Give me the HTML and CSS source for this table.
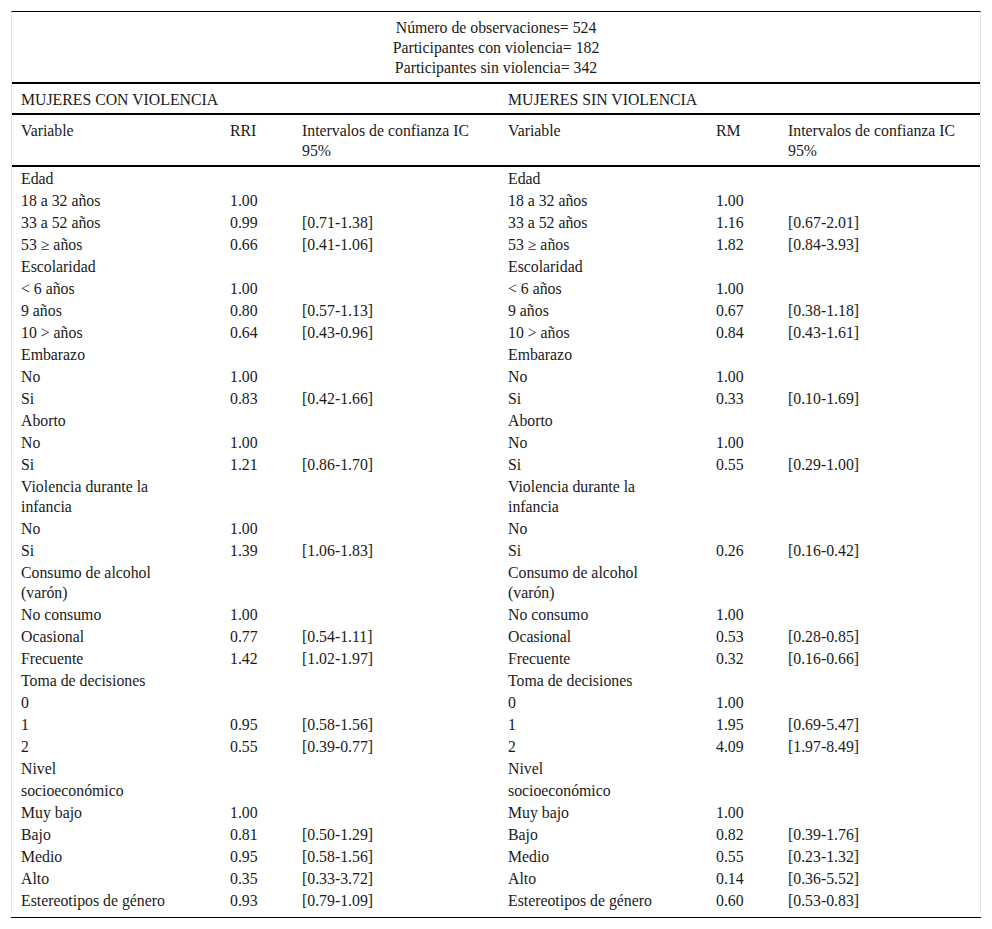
FILE: index.html
```html
<!DOCTYPE html>
<html lang="es">
<head>
<meta charset="utf-8">
<link rel="stylesheet" href="styles.css">
</head>
<body>
<div class="frame">
<table class="tbl">
<colgroup>
<col class="c1"><col class="c2"><col class="c3"><col class="c4"><col class="c5"><col class="c6">
</colgroup>
<thead>
<tr class="summary"><th colspan="6">Número de observaciones= 524<br>Participantes con violencia= 182<br>Participantes sin violencia= 342</th></tr>
<tr class="groups"><th colspan="3">MUJERES CON VIOLENCIA</th><th colspan="3">MUJERES SIN VIOLENCIA</th></tr>
<tr class="heads"><th>Variable</th><th>RRI</th><th>Intervalos de confianza IC 95%</th><th>Variable</th><th>RM</th><th>Intervalos de confianza IC 95%</th></tr>
</thead>
<tbody>
<tr class="first"><td>Edad</td><td></td><td></td><td>Edad</td><td></td><td></td></tr>
<tr><td>18 a 32 años</td><td>1.00</td><td></td><td>18 a 32 años</td><td>1.00</td><td></td></tr>
<tr><td>33 a 52 años</td><td>0.99</td><td>[0.71-1.38]</td><td>33 a 52 años</td><td>1.16</td><td>[0.67-2.01]</td></tr>
<tr><td>53 ≥ años</td><td>0.66</td><td>[0.41-1.06]</td><td>53 ≥ años</td><td>1.82</td><td>[0.84-3.93]</td></tr>
<tr><td>Escolaridad</td><td></td><td></td><td>Escolaridad</td><td></td><td></td></tr>
<tr><td>&lt; 6 años</td><td>1.00</td><td></td><td>&lt; 6 años</td><td>1.00</td><td></td></tr>
<tr><td>9 años</td><td>0.80</td><td>[0.57-1.13]</td><td>9 años</td><td>0.67</td><td>[0.38-1.18]</td></tr>
<tr><td>10 &gt; años</td><td>0.64</td><td>[0.43-0.96]</td><td>10 &gt; años</td><td>0.84</td><td>[0.43-1.61]</td></tr>
<tr><td>Embarazo</td><td></td><td></td><td>Embarazo</td><td></td><td></td></tr>
<tr><td>No</td><td>1.00</td><td></td><td>No</td><td>1.00</td><td></td></tr>
<tr><td>Si</td><td>0.83</td><td>[0.42-1.66]</td><td>Si</td><td>0.33</td><td>[0.10-1.69]</td></tr>
<tr><td>Aborto</td><td></td><td></td><td>Aborto</td><td></td><td></td></tr>
<tr><td>No</td><td>1.00</td><td></td><td>No</td><td>1.00</td><td></td></tr>
<tr><td>Si</td><td>1.21</td><td>[0.86-1.70]</td><td>Si</td><td>0.55</td><td>[0.29-1.00]</td></tr>
<tr><td>Violencia durante la<br>infancia</td><td></td><td></td><td>Violencia durante la<br>infancia</td><td></td><td></td></tr>
<tr><td>No</td><td>1.00</td><td></td><td>No</td><td></td><td></td></tr>
<tr><td>Si</td><td>1.39</td><td>[1.06-1.83]</td><td>Si</td><td>0.26</td><td>[0.16-0.42]</td></tr>
<tr><td>Consumo de alcohol<br>(varón)</td><td></td><td></td><td>Consumo de alcohol<br>(varón)</td><td></td><td></td></tr>
<tr><td>No consumo</td><td>1.00</td><td></td><td>No consumo</td><td>1.00</td><td></td></tr>
<tr><td>Ocasional</td><td>0.77</td><td>[0.54-1.11]</td><td>Ocasional</td><td>0.53</td><td>[0.28-0.85]</td></tr>
<tr><td>Frecuente</td><td>1.42</td><td>[1.02-1.97]</td><td>Frecuente</td><td>0.32</td><td>[0.16-0.66]</td></tr>
<tr><td>Toma de decisiones</td><td></td><td></td><td>Toma de decisiones</td><td></td><td></td></tr>
<tr><td>0</td><td></td><td></td><td>0</td><td>1.00</td><td></td></tr>
<tr><td>1</td><td>0.95</td><td>[0.58-1.56]</td><td>1</td><td>1.95</td><td>[0.69-5.47]</td></tr>
<tr><td>2</td><td>0.55</td><td>[0.39-0.77]</td><td>2</td><td>4.09</td><td>[1.97-8.49]</td></tr>
<tr><td>Nivel</td><td></td><td></td><td>Nivel</td><td></td><td></td></tr>
<tr><td>socioeconómico</td><td></td><td></td><td>socioeconómico</td><td></td><td></td></tr>
<tr><td>Muy bajo</td><td>1.00</td><td></td><td>Muy bajo</td><td>1.00</td><td></td></tr>
<tr><td>Bajo</td><td>0.81</td><td>[0.50-1.29]</td><td>Bajo</td><td>0.82</td><td>[0.39-1.76]</td></tr>
<tr><td>Medio</td><td>0.95</td><td>[0.58-1.56]</td><td>Medio</td><td>0.55</td><td>[0.23-1.32]</td></tr>
<tr><td>Alto</td><td>0.35</td><td>[0.33-3.72]</td><td>Alto</td><td>0.14</td><td>[0.36-5.52]</td></tr>
<tr><td>Estereotipos de género</td><td>0.93</td><td>[0.79-1.09]</td><td>Estereotipos de género</td><td>0.60</td><td>[0.53-0.83]</td></tr>
</tbody>
</table>
</div>
<div class="bottom-rule"></div>
</body>
</html>
```
FILE: styles.css
```css
html, body {
  margin: 0;
  padding: 0;
  background: #fff;
}
body {
  padding: 11px 11px 0 11px;
  font-family: "Liberation Serif", "Times New Roman", serif;
  font-size: 16px;
  color: #1a1a1a;
}
.frame {
  width: 968px;
  border-top: 1px solid #000;
  border-left: 1px solid #e2e2e2;
  border-right: 1px solid #e2e2e2;
  padding-bottom: 1px;
}
.tbl {
  width: 968px;
  border-collapse: collapse;
  table-layout: fixed;
  font-size: 15.8px;
}
.c1 { width: 209px; }
.c2 { width: 72px; }
.c3 { width: 206px; }
.c4 { width: 208px; }
.c5 { width: 72px; }
.c6 { width: 201px; }
.tbl th, .tbl td {
  text-align: left;
  font-weight: normal;
  vertical-align: top;
  line-height: 20px;
  padding: 2px 10px 0 9px;
}
.summary th {
  text-align: center;
  padding: 6px 10px 4px;
  border-bottom: 2px solid #000;
}
.groups th {
  padding: 6px 10px 3px 9px;
  border-bottom: 2px solid #000;
}
.heads th {
  padding: 6px 10px 4px 9px;
  border-bottom: 2px solid #000;
}
.bottom-rule {
  width: 970px;
  height: 1px;
  background: #000;
  margin-top: 5px;
}
```
